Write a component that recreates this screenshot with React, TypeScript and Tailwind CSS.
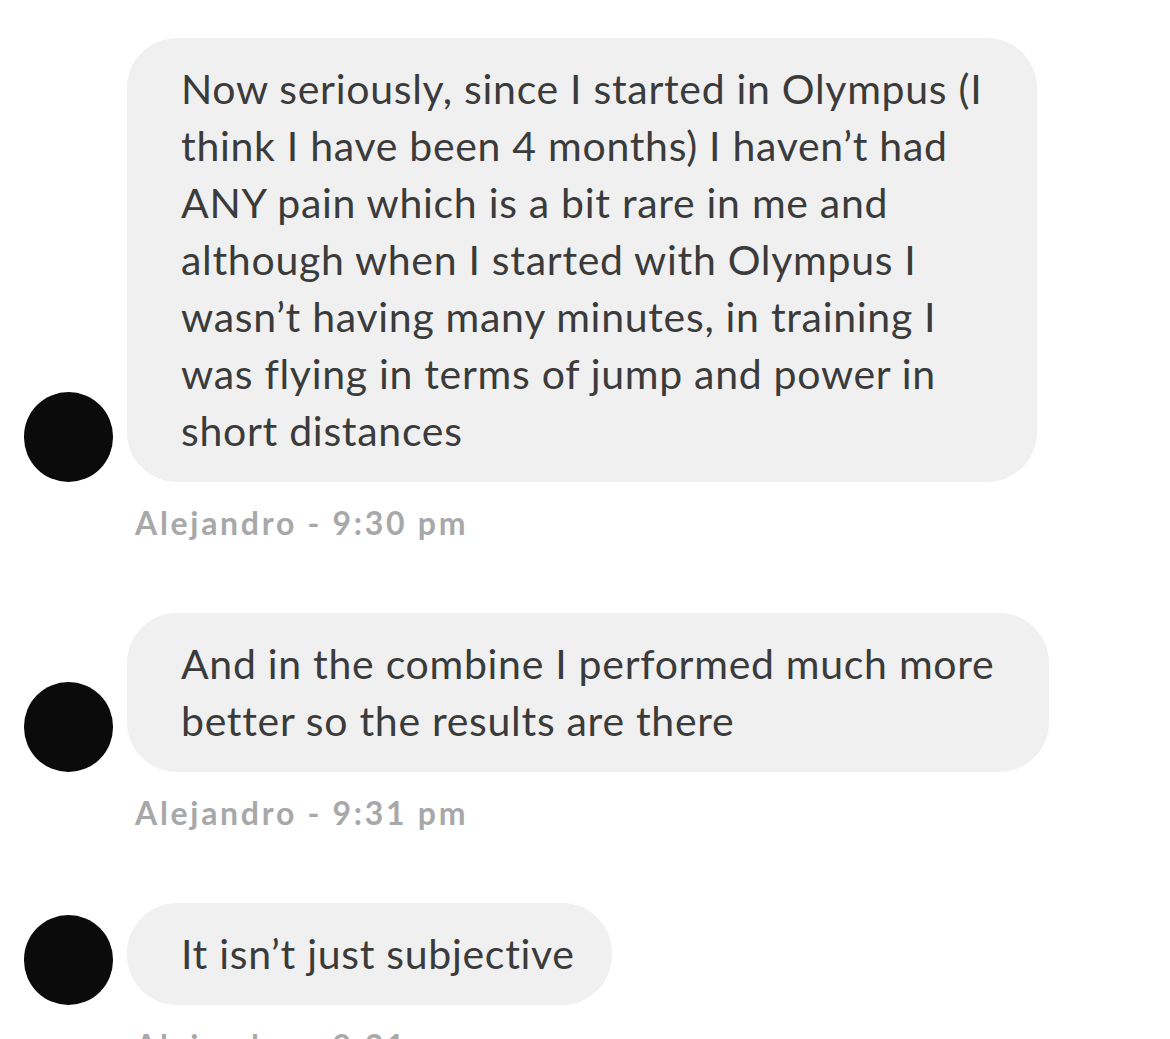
const messages = [
  {
    lines: [
      'Now seriously, since I started in Olympus (I',
      'think I have been 4 months) I haven\u2019t had',
      'ANY pain which is a bit rare in me and',
      'although when I started with Olympus I',
      'wasn\u2019t having many minutes, in training I',
      'was flying in terms of jump and power in',
      'short distances',
    ],
    time: '9:30 pm',
    pad: 'pr-[55px]',
  },
  {
    lines: ['And in the combine I performed much more', 'better so the results are there'],
    time: '9:31 pm',
    pad: 'pr-[55px]',
  },
  {
    lines: ['It isn\u2019t just subjective'],
    time: '9:31 pm',
    pad: 'pr-[37px]',
  },
];

function Message({ lines, time, pad, first }: { lines: string[]; time: string; pad: string; first?: boolean }) {
  return (
    <div className={first ? '' : 'mt-[70px]'}>
      <div className="flex items-end gap-[14px]">
        {/* avatar */}
        <div className="w-[89px] h-[90px] rounded-full bg-[#0b0b0b] shrink-0" />
        <div className={`bg-[#f0f0f0] rounded-[50px] pl-[54px] ${pad} pt-[22px] pb-[23px] text-[41px] tracking-[0.7px] leading-[57px] text-[#3b3b3b] whitespace-nowrap`}>
          {lines.map((l, i) => (
            <div key={i}>{l}</div>
          ))}
        </div>
      </div>
      <div className="ml-[111px] mt-[21px] text-[32px] tracking-[2.7px] leading-[40px] font-bold text-[#a8a8a8]">
        Alejandro - {time}
      </div>
    </div>
  );
}

export default function App() {
  return (
    <div className="w-[1170px] h-[1039px] overflow-hidden bg-white pt-[38px] pl-[24px]" style={{ fontFamily: 'Lato, "Noto Sans", sans-serif' }}>
      {messages.map((m, i) => (
        <Message key={i} lines={m.lines} time={m.time} pad={m.pad} first={i === 0} />
      ))}
    </div>
  );
}
